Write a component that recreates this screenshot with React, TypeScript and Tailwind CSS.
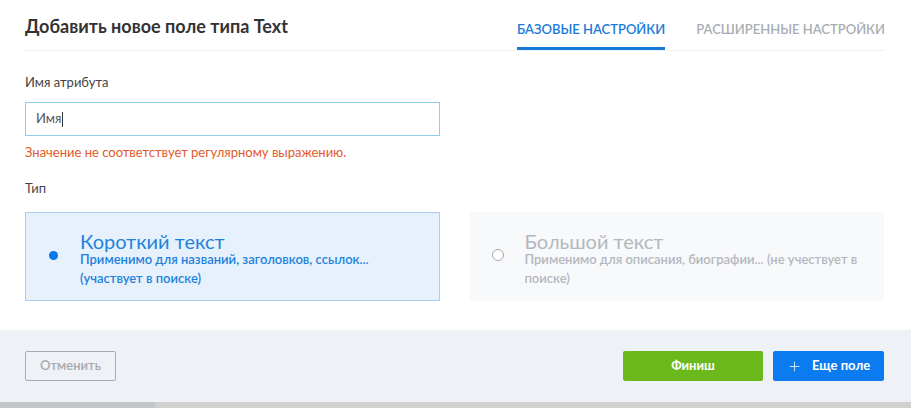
import { Plus } from "lucide-react";

function TypeCard({
  active,
  title,
  text,
}: {
  active: boolean;
  title: string;
  text: string;
}) {
  return (
    <div
      className={
        active
          ? "flex h-[89px] flex-1 items-start gap-[21px] border border-[#a9cdf0] bg-[#e6f1fc] pl-[21px] pr-[16px] pt-[19px]"
          : "flex h-[89px] flex-1 items-start gap-[21px] border border-[#f8f9fa] bg-[#f8f9fa] pl-[21px] pr-[16px] pt-[19px]"
      }
    >
      {active ? (
        <span className="mt-[17px] flex h-[12px] w-[12px] shrink-0 items-center justify-center rounded-full">
          <span className="h-[9px] w-[9px] rounded-full bg-[#0b78e8]" />
        </span>
      ) : (
        <span className="mt-[17px] h-[12px] w-[12px] shrink-0 rounded-full border border-[#a2a6ad] bg-white" />
      )}
      <div className={active ? "text-[#1f82dd]" : "text-[#b3b8c0]"}>
        <div className="text-[20px] font-normal leading-[18px]">{title}</div>
        <div className="text-[13px] font-semibold leading-[19px]">{text}</div>
      </div>
    </div>
  );
}

export default function App() {
  return (
    <div className="flex h-[408px] w-[911px] flex-col bg-white font-['Lato',sans-serif] text-[#3a3a3a]">
      <header className="ml-[25px] mr-[26px] flex h-[51px] items-end justify-between border-b border-[#eef0f2]">
        <h1 className="mb-[10px] text-[18px] font-bold text-[#333]">Добавить новое поле типа Text</h1>
        <nav className="flex gap-[31px] text-[13px] font-semibold uppercase">
          <span className="border-b-[3px] border-[#1a7ad9] pb-[8px] text-[#1a7ad9]">Базовые настройки</span>
          <span className="pb-[8px] text-[#a9adb4]">Расширенные настройки</span>
        </nav>
      </header>

      <main className="flex-1 pl-[25px] pr-[27px] pt-[22px]">
        <label className="block text-[13px] leading-[18px] text-[#444]">Имя атрибута</label>
        <div className="mt-[11px] flex h-[34px] w-[415px] items-center border border-[#8ccfe6] px-[10px] text-[13px] text-[#555]">
          Имя<span className="ml-px h-[15px] w-px bg-[#333]" />
        </div>
        <p className="mt-[7px] text-[13px] leading-[18px] text-[#e2592b]">
          Значение не соответствует регулярному выражению.
        </p>
        <p className="mt-[18px] text-[13px] leading-[18px] text-[#444]">Тип</p>
        <div className="mt-[15px] flex gap-[30px]">
          <TypeCard
            active
            title="Короткий текст"
            text="Применимо для названий, заголовков, ссылок... (участвует в поиске)"
          />
          <TypeCard
            active={false}
            title="Большой текст"
            text="Применимо для описания, биографии... (не учествует в поиске)"
          />
        </div>
      </main>

      <footer className="flex h-[72px] items-center justify-between bg-[#eef1f5] pl-[25px] pr-[27px]">
        <button className="h-[30px] w-[91px] rounded-[2px] border border-[#a8abb1] text-[13px] font-semibold text-[#a6aab1]">
          Отменить
        </button>
        <div className="flex gap-[10px]">
          <button className="h-[30px] w-[140px] rounded-[2px] bg-[#6bb81c] text-[13px] font-bold text-white">
            Финиш
          </button>
          <button className="flex h-[30px] w-[111px] items-center justify-center gap-[10px] rounded-[2px] bg-[#0b7cf0] text-[13px] font-bold text-white">
            <Plus className="h-[15px] w-[15px]" strokeWidth={1.25} />
            Еще поле
          </button>
        </div>
      </footer>
      <div className="flex h-[6px]">
        <div className="w-[155px] bg-[#c4c5c6]" />
        <div className="flex-1 bg-[#d0d0d0]" />
      </div>
    </div>
  );
}
